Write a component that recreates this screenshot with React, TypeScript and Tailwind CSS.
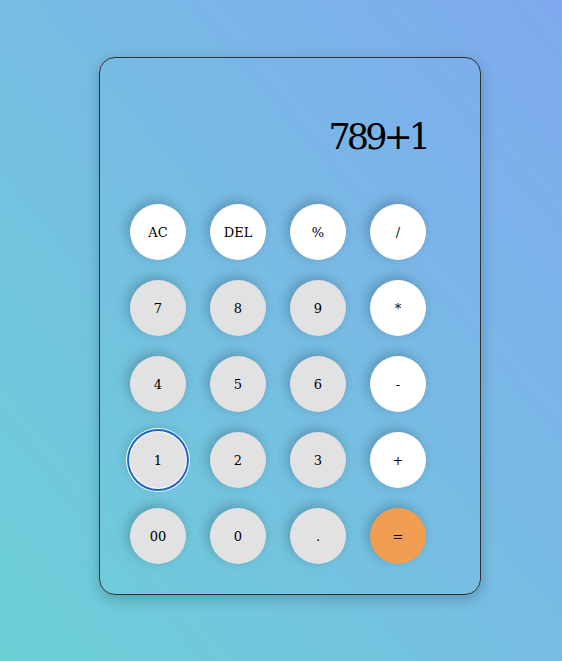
const keys = [
  { label: 'AC', kind: 'op' },
  { label: 'DEL', kind: 'op' },
  { label: '%', kind: 'op' },
  { label: '/', kind: 'op' },
  { label: '7', kind: 'num' },
  { label: '8', kind: 'num' },
  { label: '9', kind: 'num' },
  { label: '*', kind: 'op' },
  { label: '4', kind: 'num' },
  { label: '5', kind: 'num' },
  { label: '6', kind: 'num' },
  { label: '-', kind: 'op' },
  { label: '1', kind: 'num', focus: true },
  { label: '2', kind: 'num' },
  { label: '3', kind: 'num' },
  { label: '+', kind: 'op' },
  { label: '00', kind: 'num' },
  { label: '0', kind: 'num' },
  { label: '.', kind: 'num' },
  { label: '=', kind: 'eq' },
];

const kindClass: Record<string, string> = {
  op: 'bg-white',
  num: 'bg-[#e2e2e2]',
  eq: 'bg-[#f19d52]',
};

export default function App() {
  return (
    <div className="min-h-screen w-full bg-linear-to-tr from-[#6bd0d6] to-[#7fa9ef] pt-[57px] pl-[99px] font-['DejaVu_Serif',serif]">
      <div className="w-[382px] h-[538px] rounded-[16px] border border-[#333] shadow-[0_4px_14px_rgba(0,0,0,0.22)] px-[30px]">
        <div className="h-[146px] flex items-start justify-end pt-[62px] pr-[23px]">
          <span className="text-[35px] leading-none tracking-[-4px] text-black">789+1</span>
        </div>
        <div className="grid grid-cols-[repeat(4,56px)] gap-x-[24px] gap-y-[20px]">
          {keys.map((k) => (
            <button
              key={k.label}
              className={`w-[56px] h-[56px] rounded-full flex items-center justify-center pt-[2px] text-[13px] text-black ${kindClass[k.kind]} ${
                k.focus
                  ? 'shadow-[0_0_0_1px_white,0_0_0_3px_#1b64c8,0_0_0_4px_white,-3px_-3px_12px_rgba(0,0,0,0.22)]'
                  : 'shadow-[-3px_-3px_12px_rgba(0,0,0,0.22)]'
              }`}
            >
              {k.label}
            </button>
          ))}
        </div>
      </div>
    </div>
  );
}
